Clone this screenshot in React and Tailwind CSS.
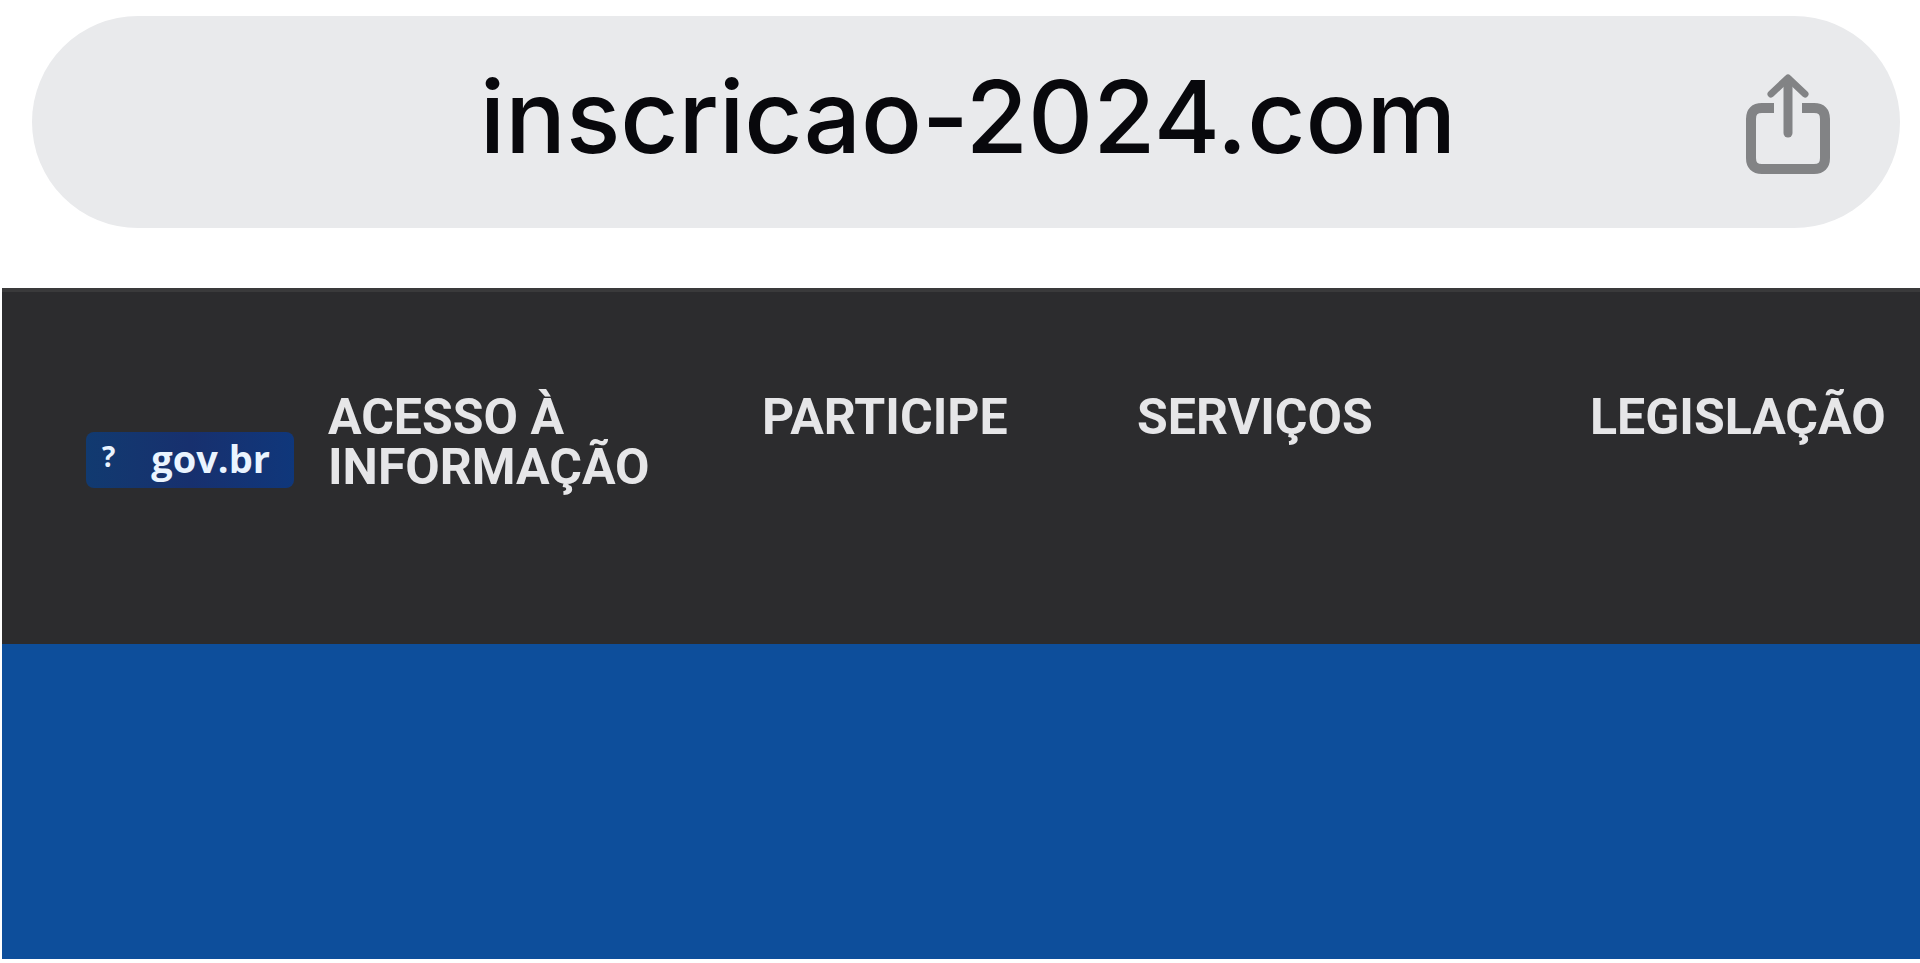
const NAV_ITEMS = ['Acesso à Informação', 'Participe', 'Serviços', 'Legislação'];

function ShareIcon() {
  return (
    <svg
      className="w-22 h-26"
      viewBox="0 0 88 104"
      fill="none"
      stroke="currentColor"
      strokeLinecap="round"
      strokeLinejoin="round"
      aria-hidden="true"
    >
      <path
        d="M30 36H18Q7 36 7 47V86Q7 97 18 97H70Q81 97 81 86V47Q81 36 70 36H58"
        strokeWidth="10"
        strokeLinecap="butt"
      />
      <path d="M44 8V61" strokeWidth="9" />
      <path d="M27 22L44 6L61 22" strokeWidth="7" />
    </svg>
  );
}

function AddressBar() {
  return (
    <div className="pl-8 pr-5 pt-4 pb-15">
      <div className="flex items-center h-53 pt-1 pl-40 pr-17 rounded-full bg-[#e9eaec]">
        <input
          type="text"
          readOnly
          aria-label="Endereço"
          defaultValue="inscricao-2024.com"
          className="flex-1 min-w-0 h-40 pb-4 bg-transparent text-center font-['Inter',sans-serif] font-medium text-[101px] text-[#08080c] outline-none"
        />
        <button type="button" aria-label="Compartilhar" className="shrink-0 text-[#828385]">
          <ShareIcon />
        </button>
      </div>
    </div>
  );
}

function GovLogo() {
  return (
    <a
      href="#inicio"
      className="flex items-center justify-between w-52 h-14 mt-10 pl-4 pr-6 rounded-lg bg-linear-to-r from-[#113a70] via-[#17306e] to-[#0f377b] text-[#eaf4ff] leading-none"
    >
      <span className="pb-2 font-['Open_Sans',sans-serif] font-bold text-[28px]">?</span>
      <span className="pb-1 font-['Open_Sans',sans-serif] font-bold text-[38px]">gov.br</span>
    </a>
  );
}

function Header() {
  return (
    <header className="grid grid-cols-[242fr_434fr_375fr_453fr_330fr] items-start min-h-89 pt-25 pl-21 bg-[#2c2c2e] border-t-4 border-[#3a3a3b]">
      <GovLogo />
      {/* the nav shares the header grid so its items line up with the logo column */}
      <nav className="contents">
        {NAV_ITEMS.map(item => (
          <a
            key={item}
            href="#menu"
            className="w-min font-['Roboto',sans-serif] font-bold text-[50px] leading-[50px] text-[#e6e6e8] uppercase"
          >
            {item}
          </a>
        ))}
      </nav>
    </header>
  );
}

export default function App() {
  return (
    <div className="flex flex-col min-h-screen pb-1 bg-white overflow-x-hidden">
      <AddressBar />
      <div className="flex flex-col flex-1 ml-0.5">
        <Header />
        <main className="flex-1 bg-[#0d4e9b]" />
      </div>
    </div>
  );
}
